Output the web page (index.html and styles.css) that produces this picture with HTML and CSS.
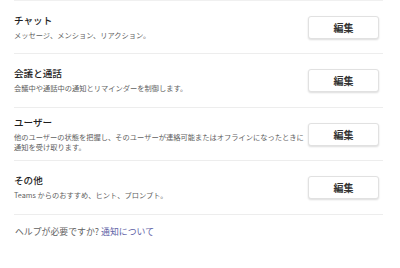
FILE: index.html
```html
<!DOCTYPE html>
<html lang="ja">
<head>
<meta charset="utf-8">
<link rel="stylesheet" href="styles.css">
</head>
<body>
<div class="panel">
  <div class="row">
    <div class="text">
      <div class="title">チャット</div>
      <div class="desc">メッセージ、メンション、リアクション。</div>
    </div>
    <button class="btn">編集</button>
  </div>
  <div class="row">
    <div class="text">
      <div class="title">会議と通話</div>
      <div class="desc">会議中や通話中の通知とリマインダーを制御します。</div>
    </div>
    <button class="btn">編集</button>
  </div>
  <div class="row">
    <div class="text">
      <div class="title">ユーザー</div>
      <div class="desc">他のユーザーの状態を把握し、そのユーザーが連絡可能またはオフラインになったときに通知を受け取ります。</div>
    </div>
    <button class="btn">編集</button>
  </div>
  <div class="row">
    <div class="text">
      <div class="title">その他</div>
      <div class="desc">Teams からのおすすめ、ヒント、プロンプト。</div>
    </div>
    <button class="btn">編集</button>
  </div>
  <p class="help">ヘルプが必要ですか? <a class="link" href="#">通知について</a></p>
</div>
</body>
</html>
```
FILE: styles.css
```css
html, body {
  margin: 0;
  padding: 0;
  background: #ffffff;
}
body {
  font-family: "Noto Sans CJK JP", "Noto Sans", sans-serif;
  color: #242424;
}
.panel {
  width: 369px;
  margin-left: 14px;
  border-top: 1px solid #f0f0f0;
}
.row {
  display: flex;
  align-items: center;
  min-height: 53px;
  border-bottom: 1px solid #ededed;
  box-sizing: border-box;
  padding-right: 4px;
}
.row:nth-child(even) {
  min-height: 54px;
}
.text {
  flex: 1;
  display: flex;
  flex-direction: column;
  gap: 3px;
  min-width: 0;
  margin-top: -2px;
}
.title {
  font-size: 9.6px;
  font-weight: 500;
  line-height: 14px;
  color: #1f1f1f;
}
.desc {
  font-size: 7.25px;
  line-height: 10px;
  color: #616161;
}
.btn {
  flex: none;
  width: 71px;
  height: 23px;
  margin-left: 3px;
  background: #ffffff;
  border: 1px solid #e1e1e1;
  border-radius: 3px;
  box-shadow: 0 1px 2px rgba(0, 0, 0, 0.14);
  font-family: "Noto Sans CJK JP", sans-serif;
  font-size: 10px;
  font-weight: 700;
  color: #333333;
  padding: 0;
}
.help {
  margin: 11px 0 0 1px;
  font-size: 8.9px;
  line-height: 12px;
  color: #616161;
}
.link {
  color: #6264a7;
  text-decoration: none;
}
```
